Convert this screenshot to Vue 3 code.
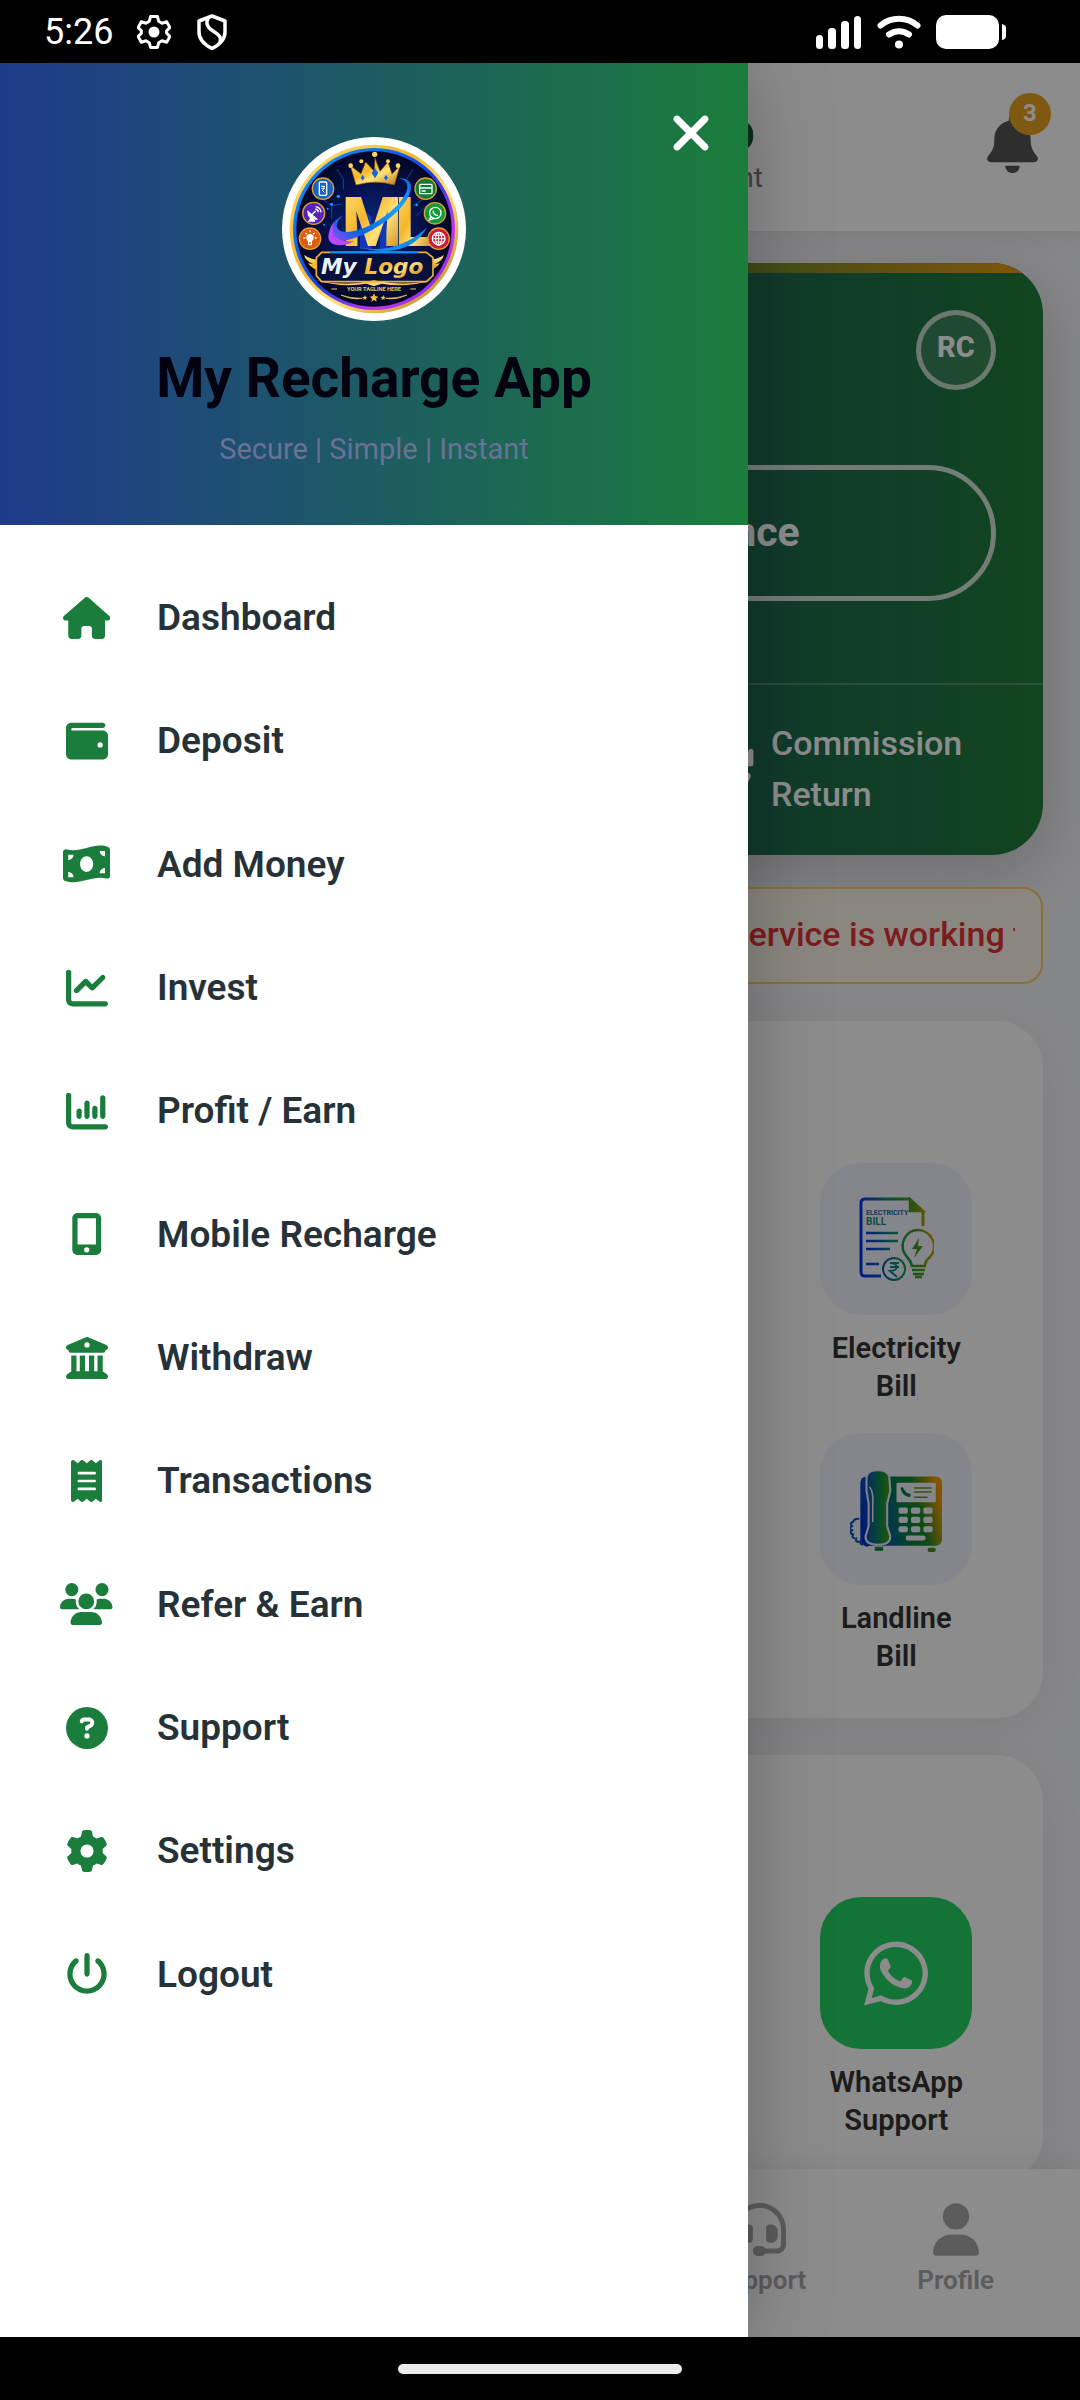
<script setup>
const menu = [
  { label: 'Dashboard', w: 576, path: 'M575.8 255.5c0 18-15 32.1-32 32.1l-32 0 .7 160.2c0 2.7-.2 5.4-.5 8.1l0 16.2c0 22.1-17.9 40-40 40l-16 0c-1.1 0-2.2 0-3.3-.1c-1.4 .1-2.8 .1-4.2 .1L416 512l-24 0c-22.1 0-40-17.9-40-40l0-24 0-64c0-17.7-14.3-32-32-32l-64 0c-17.7 0-32 14.3-32 32l0 64 0 24c0 22.1-17.9 40-40 40l-24 0-31.9 0c-1.5 0-3-.1-4.5-.2c-1.2 .1-2.4 .2-3.6 .2l-16 0c-22.1 0-40-17.9-40-40l0-112c0-.9 0-1.9 .1-2.8l0-69.7-32 0c-18 0-32-14-32-32.1c0-9 3-17 10-24L266.4 8c7-7 15-8 22-8s15 2 21 7L564.8 231.5c8 7 12 15 11 24z' },
  { label: 'Deposit', w: 512, path: 'M64 32C28.7 32 0 60.7 0 96L0 416c0 35.3 28.7 64 64 64l384 0c35.3 0 64-28.7 64-64l0-224c0-35.3-28.7-64-64-64L80 128c-8.8 0-16-7.2-16-16s7.2-16 16-16l368 0c17.7 0 32-14.3 32-32s-14.3-32-32-32L64 32zM416 272a32 32 0 1 1 0 64 32 32 0 1 1 0-64z' },
  { label: 'Add Money', w: 576, path: 'M0 112.5L0 422.3c0 18 10.1 35 27 41.3c87 32.5 174 10.3 261-11.9c79.8-20.3 159.6-40.7 239.3-18.9c23 6.3 48.7-9.5 48.7-33.4l0-309.9c0-18-10.1-35-27-41.3C462 15.9 375 38.1 288 60.3C208.2 80.6 128.4 100.9 48.7 79.1C25.6 72.8 0 88.6 0 112.5zM288 352c-44.2 0-80-43-80-96s35.8-96 80-96s80 43 80 96s-35.8 96-80 96zM64 352c35.3 0 64 28.7 64 64l-64 0 0-64zm64-208c0 35.3-28.7 64-64 64l0-64 64 0zM512 304l0 64-64 0c0-35.3 28.7-64 64-64zM448 96l64 0 0 64c-35.3 0-64-28.7-64-64z' },
  { label: 'Invest', w: 512, path: 'M64 64c0-17.7-14.3-32-32-32S0 46.3 0 64L0 400c0 44.2 35.8 80 80 80l400 0c17.7 0 32-14.3 32-32s-14.3-32-32-32L80 416c-8.8 0-16-7.2-16-16L64 64zm406.6 86.6c12.5-12.5 12.5-32.8 0-45.3s-32.8-12.5-45.3 0L320 210.7l-57.4-57.4c-12.5-12.5-32.8-12.5-45.3 0l-112 112c-12.5 12.5-12.5 32.8 0 45.3s32.8 12.5 45.3 0L240 221.3l57.4 57.4c12.5 12.5 32.8 12.5 45.3 0l128-128z' },
  { label: 'Profit / Earn', w: 512, path: 'M32 32c17.7 0 32 14.3 32 32l0 336c0 8.8 7.2 16 16 16l400 0c17.7 0 32 14.3 32 32s-14.3 32-32 32L80 480c-44.2 0-80-35.8-80-80L0 64C0 46.3 14.3 32 32 32zM160 224c17.7 0 32 14.3 32 32l0 64c0 17.7-14.3 32-32 32s-32-14.3-32-32l0-64c0-17.7 14.3-32 32-32zm128-32l0 128c0 17.7-14.3 32-32 32s-32-14.3-32-32l0-160c0-17.7 14.3-32 32-32s32 14.3 32 32zm64 0c17.7 0 32 14.3 32 32l0 96c0 17.7-14.3 32-32 32s-32-14.3-32-32l0-96c0-17.7 14.3-32 32-32zM480 96l0 224c0 17.7-14.3 32-32 32s-32-14.3-32-32l0-224c0-17.7 14.3-32 32-32s32 14.3 32 32z' },
  { label: 'Mobile Recharge', w: 384, path: 'M16 64C16 28.7 44.7 0 80 0L304 0c35.3 0 64 28.7 64 64l0 384c0 35.3-28.7 64-64 64L80 512c-35.3 0-64-28.7-64-64L16 64zM224 448a32 32 0 1 0 -64 0 32 32 0 1 0 64 0zM304 64L80 64l0 320 224 0 0-320z' },
  { label: 'Withdraw', w: 512, path: 'M243.4 2.6l-224 96c-14 6-21.8 21-18.7 35.8S16.8 160 32 160l0 8c0 13.3 10.7 24 24 24l400 0c13.3 0 24-10.7 24-24l0-8c15.2 0 28.3-10.7 31.3-25.6s-4.8-29.9-18.7-35.8l-224-96c-8-3.4-17.2-3.4-25.2 0zM128 224l-64 0 0 196.3c-.6 .3-1.2 .7-1.8 1.1l-48 32c-11.7 7.8-17 22.4-12.9 35.9S17.9 512 32 512l448 0c14.1 0 26.5-9.2 30.6-22.7s-1.1-28.1-12.9-35.9l-48-32c-.6-.4-1.2-.7-1.8-1.1L448 224l-64 0 0 192-40 0 0-192-64 0 0 192-48 0 0-192-64 0 0 192-40 0 0-192zM256 64a32 32 0 1 1 0 64 32 32 0 1 1 0-64z' },
  { label: 'Transactions', w: 384, path: 'M14 2.2C22.5-1.7 32.5-.3 39.6 5.8L80 40.4 120.4 5.8c9-7.7 22.3-7.7 31.2 0L192 40.4 232.4 5.8c9-7.7 22.2-7.7 31.2 0L304 40.4 344.4 5.8c7.1-6.1 17.1-7.5 25.6-3.6s14 12.4 14 21.8l0 464c0 9.4-5.5 17.9-14 21.8s-18.5 2.5-25.6-3.6L304 471.6l-40.4 34.6c-9 7.7-22.2 7.7-31.2 0L192 471.6l-40.4 34.6c-9 7.7-22.3 7.7-31.2 0L80 471.6 39.6 506.2c-7.1 6.1-17.1 7.5-25.6 3.6S0 497.4 0 488L0 24C0 14.6 5.5 6.1 14 2.2zM96 144c-8.8 0-16 7.2-16 16s7.2 16 16 16l192 0c8.8 0 16-7.2 16-16s-7.2-16-16-16L96 144zM80 352c0 8.8 7.2 16 16 16l192 0c8.8 0 16-7.2 16-16s-7.2-16-16-16L96 336c-8.8 0-16 7.2-16 16zM96 240c-8.8 0-16 7.2-16 16s7.2 16 16 16l192 0c8.8 0 16-7.2 16-16s-7.2-16-16-16L96 240z' },
  { label: 'Refer & Earn', w: 640, path: 'M144 0a80 80 0 1 1 0 160A80 80 0 1 1 144 0zM512 0a80 80 0 1 1 0 160A80 80 0 1 1 512 0zM0 298.7C0 239.8 47.8 192 106.7 192l42.7 0c15.9 0 31 3.5 44.6 9.7c-1.3 7.2-1.9 14.7-1.9 22.3c0 38.2 16.8 72.5 43.3 96c-.2 0-.4 0-.7 0L21.3 320C9.6 320 0 310.4 0 298.7zM405.3 320c-.2 0-.4 0-.7 0c26.6-23.5 43.3-57.8 43.3-96c0-7.6-.7-15-1.9-22.3c13.6-6.3 28.7-9.7 44.6-9.7l42.7 0C592.2 192 640 239.8 640 298.7c0 11.8-9.6 21.3-21.3 21.3l-213.3 0zM224 224a96 96 0 1 1 192 0 96 96 0 1 1 -192 0zM128 485.3C128 411.7 187.7 352 261.3 352l117.3 0C452.3 352 512 411.7 512 485.3c0 14.7-11.9 26.7-26.7 26.7l-330.7 0c-14.7 0-26.7-11.9-26.7-26.7z' },
  { label: 'Support', w: 512, path: 'M256 512A256 256 0 1 0 256 0a256 256 0 1 0 0 512zM169.8 165.3c7.9-22.3 29.1-37.3 52.8-37.3l58.3 0c34.9 0 63.1 28.3 63.1 63.1c0 22.6-12.1 43.5-31.7 54.8L280 264.4c-.2 13-10.9 23.6-24 23.6c-13.3 0-24-10.7-24-24l0-13.5c0-8.6 4.6-16.5 12.1-20.8l44.3-25.4c4.7-2.7 7.6-7.7 7.6-13.1c0-8.4-6.8-15.1-15.1-15.1l-58.3 0c-3.4 0-6.4 2.1-7.5 5.3l-.4 1.2c-4.4 12.5-18.2 19-30.6 14.6s-19-18.2-14.6-30.6l.4-1.2zM224 352a32 32 0 1 1 64 0 32 32 0 1 1 -64 0z' },
  { label: 'Settings', w: 512, path: 'M495.9 166.6c3.2 8.7 .5 18.4-6.4 24.6l-43.3 39.4c1.1 8.3 1.7 16.8 1.7 25.4s-.6 17.1-1.7 25.4l43.3 39.4c6.9 6.2 9.6 15.9 6.4 24.6c-4.4 11.9-9.7 23.3-15.8 34.3l-4.7 8.1c-6.6 11-14 21.4-22.1 31.2c-5.9 7.2-15.7 9.6-24.5 6.8l-55.7-17.7c-13.4 10.3-28.2 18.9-44 25.4l-12.5 57.1c-2 9.1-9 16.3-18.2 17.8c-13.8 2.3-28 3.5-42.5 3.5s-28.7-1.2-42.5-3.5c-9.2-1.5-16.2-8.7-18.2-17.8l-12.5-57.1c-15.8-6.5-30.6-15.1-44-25.4L83.1 425.9c-8.8 2.8-18.6 .3-24.5-6.8c-8.1-9.8-15.5-20.2-22.1-31.2l-4.7-8.1c-6.1-11-11.4-22.4-15.8-34.3c-3.2-8.7-.5-18.4 6.4-24.6l43.3-39.4C64.6 273.1 64 264.6 64 256s.6-17.1 1.7-25.4L22.4 191.2c-6.9-6.2-9.6-15.9-6.4-24.6c4.4-11.9 9.7-23.3 15.8-34.3l4.7-8.1c6.6-11 14-21.4 22.1-31.2c5.9-7.2 15.7-9.6 24.5-6.8l55.7 17.7c13.4-10.3 28.2-18.9 44-25.4l12.5-57.1c2-9.1 9-16.3 18.2-17.8C227.3 1.2 241.5 0 256 0s28.7 1.2 42.5 3.5c9.2 1.5 16.2 8.7 18.2 17.8l12.5 57.1c15.8 6.5 30.6 15.1 44 25.4l55.7-17.7c8.8-2.8 18.6-.3 24.5 6.8c8.1 9.8 15.5 20.2 22.1 31.2l4.7 8.1c6.1 11 11.4 22.4 15.8 34.3zM256 336a80 80 0 1 0 0-160 80 80 0 1 0 0 160z' },
  { label: 'Logout', w: 512, path: 'M288 32c0-17.7-14.3-32-32-32s-32 14.3-32 32l0 224c0 17.7 14.3 32 32 32s32-14.3 32-32l0-224zM143.5 120.6c13.6-11.3 15.4-31.5 4.1-45.1s-31.5-15.4-45.1-4.1C49.7 115.4 16 181.8 16 256c0 132.5 107.5 240 240 240s240-107.5 240-240c0-74.2-33.8-140.6-86.6-184.6c-13.6-11.3-33.8-9.4-45.1 4.1s-9.4 33.8 4.1 45.1c38.9 32.3 63.5 81 63.5 135.4c0 97.2-78.8 176-176 176s-176-78.8-176-176c0-54.4 24.7-103.1 63.5-135.4z' },
]
const phonePath = 'M380.9 97.1C339 55.1 283.2 32 223.9 32c-122.4 0-222 99.6-222 222 0 39.1 10.2 77.3 29.6 111L0 480l117.7-30.9c32.4 17.7 68.9 27 106.1 27h.1c122.3 0 224.1-99.6 224.1-222 0-59.3-25.2-115-67.1-157zm-157 341.6c-33.2 0-65.7-8.9-94-25.7l-6.7-4-69.8 18.3L72 359.2l-4.4-7c-18.5-29.4-28.2-63.3-28.2-98.2 0-101.7 82.8-184.5 184.6-184.5 49.3 0 95.6 19.2 130.4 54.1 34.8 34.9 56.2 81.2 56.1 130.5 0 101.8-84.9 184.6-186.6 184.6zm101.2-138.2c-5.5-2.8-32.8-16.2-37.9-18-5.1-1.9-8.8-2.8-12.5 2.8-3.7 5.6-14.3 18-17.6 21.8-3.2 3.7-6.5 4.2-12 1.4-32.6-16.3-54-29.1-75.5-66-5.7-9.8 5.7-9.1 16.3-30.3 1.8-3.7.9-6.9-.5-9.7-1.4-2.8-12.5-30.1-17.1-41.2-4.5-10.8-9.1-9.3-12.5-9.5-3.2-.2-6.9-.2-10.6-.2-3.7 0-9.7 1.4-14.8 6.9-5.1 5.6-19.4 19-19.4 46.3 0 27.3 19.9 53.7 22.6 57.4 2.8 3.7 39.1 59.7 94.8 83.8 35.2 15.2 49 16.5 66.6 13.9 10.7-1.6 32.8-13.4 37.4-26.4 4.6-13 4.6-24.1 3.2-26.4-1.3-2.5-5-3.9-10.5-6.6z'
const keys = [0, 1, 2, 3, 4, 5, 6, 7, 8]
</script>

<template>
  <div class="phone">
    <div class="status">
      <span class="time">5:26</span>
      <svg class="s-gear" width="34" height="36" viewBox="0 0 34 36" fill="none" stroke="#fff" stroke-width="3" stroke-linejoin="round">
        <path d="M13.500 2.500h7l1.200 4.800 3.300 1.900 4.700-1.400 3.200 5.700-3.300 3.400v2.200l3.300 3.400-3.200 5.700-4.700-1.400-3.300 1.900-1.200 4.800h-7l-1.200-4.800-3.300-1.900-4.700 1.400-3.200-5.700 3.300-3.400v-2.200l-3.300-3.400 3.200-5.700 4.700 1.400 3.300-1.900z" />
        <circle cx="17" cy="18" r="5.500" fill="#fff" stroke="none" />
      </svg>
      <svg class="s-shield" width="30" height="36" viewBox="0 0 30 36" fill="none" stroke="#fff" stroke-width="3.500" stroke-linejoin="round">
        <path d="M15 2L28 7v11c0 8-6 13-13 16.500C8 31 2 26 2 18V7z" />
        <path d="M12 3c-4 6-2 10 4 14s9 6 7 12" />
      </svg>
      <span class="grow"></span>
      <svg width="46" height="34" viewBox="0 0 46 34" fill="#fff">
        <rect x="0" y="20" width="7" height="14" rx="3.500" /><rect x="12" y="13" width="8" height="21" rx="3.500" />
        <rect x="25" y="6" width="8" height="28" rx="3.500" /><rect x="38" y="1" width="7" height="33" rx="3.500" />
      </svg>
      <svg class="s-wifi" width="44" height="34" viewBox="0 0 44 34" fill="none" stroke="#fff" stroke-width="6" stroke-linecap="round">
        <path d="M3.500 10.500C14 1.500 30 1.500 40.500 10.500M12 19.500c6-4.500 14-4.500 20 0" />
        <circle cx="22" cy="29.500" r="4" fill="#fff" stroke="none" />
      </svg>
      <svg width="70" height="34" viewBox="0 0 70 34" fill="#fff">
        <rect width="63" height="34" rx="10" /><path d="M66 9q4 1 4 4v8q0 3-4 4z" />
      </svg>
    </div>

    <div class="app">
      <header class="top">
        <div class="brand">
          <strong>My Recharge App</strong>
          <span>Secure | Simple | Instant</span>
        </div>
        <button class="bell" aria-label="Notifications">
          <svg width="51" height="58" viewBox="0 0 448 512" fill="#555"><path d="M224 0c-17.700 0-32 14.300-32 32l0 19.200C119 66 64 130.600 64 208l0 18.800c0 47-17.300 92.400-48.500 127.600l-7.400 8.300c-8.400 9.400-10.400 22.900-5.300 34.400S19.400 416 32 416l384 0c12.600 0 24-7.400 29.200-18.900s3.100-25-5.300-34.400l-7.400-8.300C401.300 319.200 384 273.900 384 226.800l0-18.800c0-77.400-55-142-128-156.800L256 32c0-17.700-14.300-32-32-32zm45.300 493.300c12-12 18.700-28.300 18.700-45.300l-64 0-64 0c0 17 6.700 33.300 18.700 45.300s28.300 18.700 45.300 18.700s33.300-6.700 45.300-18.700z" /></svg>
          <span class="badge">3</span>
        </button>
      </header>

      <main class="content">
        <section class="card">
          <div class="card-bar"></div>
          <div class="card-body">
            <div class="avatar">RC</div>
            <button class="balance">Click Here to Check Balance</button>
          </div>
          <div class="card-foot">
            <svg width="51" height="51" viewBox="0 0 512 512" fill="currentColor"><path d="M142.900 142.900c-17.500 17.500-30.100 38-37.800 59.800c-5.900 16.700-24.200 25.400-40.800 19.500s-25.400-24.200-19.500-40.800C55.600 150.700 73.200 122 97.600 97.600c87.200-87.200 228.300-87.500 315.800-1L455 55c6.900-6.900 17.200-8.900 26.200-5.200s14.800 12.500 14.800 22.200l0 128c0 13.300-10.700 24-24 24l-8.400 0L344 224c-9.700 0-18.500-5.800-22.200-14.800s-1.700-19.300 5.200-26.200l41.100-41.100c-62.600-61.500-163.100-61.200-225.300 1zM16 312c0-13.300 10.700-24 24-24l7.600 0 .7 0L168 288c9.700 0 18.500 5.800 22.200 14.800s1.700 19.300-5.200 26.200l-41.100 41.100c62.600 61.500 163.100 61.200 225.300-1c17.500-17.500 30.100-38 37.800-59.800c5.900-16.700 24.200-25.400 40.800-19.500s25.400 24.200 19.500 40.800c-10.800 30.600-28.400 59.300-52.900 83.800c-87.200 87.200-228.300 87.500-315.800 1L57 457c-6.900 6.900-17.200 8.900-26.200 5.200S16 449.700 16 440l0-119.600 0-.7 0-7.600z" /></svg>
            <span>Commission Return</span>
          </div>
        </section>

        <div class="notice"><p>service is working to</p></div>

        <section class="panel">
          <h2>Recharge &amp; Bills</h2>
          <div class="grid">
            <a class="tile last" href="#">
              <span class="pic">
                <svg width="75" height="84" viewBox="0 0 75 84" fill="none" stroke="url(#rainbow)" stroke-width="2.500">
                  <defs>
                    <linearGradient id="rainbow" gradientUnits="userSpaceOnUse" x1="0" y1="40" x2="76" y2="28">
                      <stop offset="0" stop-color="#0035e8" /><stop offset=".15" stop-color="#0b46d8" /><stop offset=".5" stop-color="#0b9a55" /><stop offset=".75" stop-color="#4f9a18" /><stop offset="1" stop-color="#f0a000" />
                    </linearGradient>
                  </defs>
                  <path d="M22 79H6q-4 0-4-4V6q0-4 4-4h44l14 13v14" stroke-width="3" />
                  <path d="M51 2v12h13z" fill="url(#rainbow)" />
                  <path d="M7 36h32M7 44h32M7 52h24M7 67h13" />
                  <circle cx="35" cy="72" r="11" stroke-width="2" />
                  <path d="M31 66h9M31 70h9M31 66c9 0 9 8 0 8l7 6" stroke-width="2" />
                  <path d="M53 69q-1-5-5-9c-10-12-1-27 11-27s22 15 12 27q-5 4-5 9z" />
                  <path d="M53 73h13M54 77h11M56 80h7" />
                  <path d="M60 41l-7 11h5l-3 9 9-12h-5z" fill="url(#rainbow)" stroke="none" />
                  <text x="7" y="18" class="doc-sm" fill="#2368a8">ELECTRICITY</text>
                  <text x="7" y="28" class="doc" fill="#1c8a72">BILL</text>
                </svg>
              </span>
              <span class="name">Electricity Bill</span>
            </a>
            <a class="tile last" href="#">
              <span class="pic">
                <svg width="93" height="88" viewBox="0 0 90 80" preserveAspectRatio="xMidYMax meet" fill="none">
                  <defs>
                    <linearGradient id="desk" x1="0" y1=".6" x2="1" y2=".4">
                      <stop offset="0" stop-color="#0033c8" /><stop offset=".2" stop-color="#0a50b8" /><stop offset=".52" stop-color="#087f45" /><stop offset=".72" stop-color="#1d8828" /><stop offset="1" stop-color="#f09c00" />
                    </linearGradient>
                    <linearGradient id="handset"><stop offset="0" stop-color="#0a48c0" /><stop offset=".6" stop-color="#118a48" /><stop offset="1" stop-color="#4a9a18" /></linearGradient>
                  </defs>
                  <path d="M9 47q-5-1-6 3q-4 1-1 4q-4 2 0 4q-3 3 1 4q-2 4 3 4q-1 4 4 3q0 4 4 2q2 4 5 0q3 3 5-1" stroke="#0a50c0" stroke-width="2" />
                  <rect x="24" y="74" width="8" height="4" fill="#12884a" /><rect x="75" y="75" width="8" height="4" rx="2" fill="#45901c" />
                  <rect x="10" y="6" width="79" height="67" rx="6" fill="url(#desk)" />
                  <path d="M16 6q2-6 11-6t11 6l1 14-3 12v22l3 10q0 8-12 8t-12-8l3-10V32l-2-12z" fill="url(#handset)" stroke="#e6ecfa" stroke-width="2" />
                  <path d="M19 16q4 5 3 18v16" stroke="#e6ecfa" stroke-width="1.500" />
                  <rect x="45" y="12" width="38" height="19" rx="1" fill="#f2f4fd" />
                  <path d="M49 17q1 8 9 9l1-3-4-1-3-4-1-2z" fill="#0a7f48" />
                  <path d="M62 17h17M62 21h17M62 26h13" stroke="#6a9020" stroke-width="1.500" />
                  <rect v-for="k in keys" :key="k" :x="47 + (k % 3) * 12" :y="36 + Math.floor(k / 3) * 9" width="9" height="6" rx="2" fill="#f2f4fd" />
                  <rect x="54" y="63" width="19" height="5" rx="2" fill="#f2f4fd" />
                </svg>
              </span>
              <span class="name">Landline Bill</span>
            </a>
          </div>
        </section>

        <section class="panel">
          <h2>Help &amp; Support</h2>
          <div class="grid">
            <a class="tile last" href="#">
              <span class="pic whatsapp"><svg width="64" height="73" viewBox="0 0 448 512" fill="#fff"><path :d="phonePath" /></svg></span>
              <span class="name">WhatsApp Support</span>
            </a>
          </div>
        </section>
      </main>

      <nav class="tabs">
        <a href="#">Home</a>
        <a href="#">Recharges</a>
        <a href="#">Services</a>
        <a href="#">
          <svg width="53" height="53" viewBox="0 0 512 512" fill="currentColor"><path d="M256 48C141.100 48 48 141.100 48 256l0 40c0 13.300-10.700 24-24 24s-24-10.700-24-24l0-40C0 114.600 114.600 0 256 0S512 114.600 512 256l0 144.100c0 48.600-39.400 88-88.100 88L313.600 488c-8.300 14.300-23.800 24-41.600 24l-32 0c-26.500 0-48-21.500-48-48s21.500-48 48-48l32 0c17.800 0 33.300 9.700 41.600 24l110.400 .1c22.100 0 40-17.900 40-40L464 256c0-114.900-93.100-208-208-208zM144 208l16 0c17.700 0 32 14.300 32 32l0 112c0 17.700-14.300 32-32 32l-16 0c-35.300 0-64-28.700-64-64l0-48c0-35.300 28.700-64 64-64zm224 0c35.300 0 64 28.700 64 64l0 48c0 35.300-28.700 64-64 64l-16 0c-17.700 0-32-14.300-32-32l0-112c0-17.700 14.300-32 32-32l16 0z" /></svg>
          Support
        </a>
        <a href="#">
          <svg width="46" height="53" viewBox="0 0 448 512" fill="currentColor"><path d="M224 256A128 128 0 1 0 224 0a128 128 0 1 0 0 256zm-45.700 48C79.800 304 0 383.800 0 482.300C0 498.700 13.300 512 29.700 512l388.600 0c16.400 0 29.700-13.300 29.700-29.700C448 383.800 368.200 304 269.700 304l-91.400 0z" /></svg>
          Profile
        </a>
      </nav>

      <div class="overlay"></div>

      <aside class="drawer">
        <div class="drawer-head">
          <svg class="logo" width="184" height="184" viewBox="36 34 552 552">
            <defs>
              <linearGradient id="gold" x1="0" y1="0" x2="1" y2="1"><stop offset="0" stop-color="#ffe680" /><stop offset=".4" stop-color="#f5b62b" /><stop offset=".6" stop-color="#ffe27a" /><stop offset="1" stop-color="#b87209" /></linearGradient>
              <linearGradient id="ring" x1="0" y1="0" x2="1" y2="1"><stop offset="0" stop-color="#0aa4ff" /><stop offset=".5" stop-color="#1340e0" /><stop offset=".75" stop-color="#c832f5" /><stop offset="1" stop-color="#4a2be0" /></linearGradient>
              <linearGradient id="swoosh" x1="0" y1="1" x2="1" y2="0"><stop offset="0" stop-color="#a04bff" /><stop offset=".25" stop-color="#0a62e0" /><stop offset=".7" stop-color="#1fa4ff" /><stop offset="1" stop-color="#0a6ae8" /></linearGradient>
              <radialGradient id="night"><stop offset="0" stop-color="#0a2a80" /><stop offset=".6" stop-color="#04104a" /><stop offset="1" stop-color="#020626" /></radialGradient>
            </defs>
            <circle cx="312" cy="310" r="276" fill="#fff" />
            <circle cx="312" cy="310" r="253" fill="url(#gold)" />
            <circle cx="312" cy="310" r="243" fill="url(#ring)" />
            <circle cx="312" cy="310" r="233" fill="url(#night)" />
            <path d="M150 215l35 25v40M200 130l20 30v30M470 240l-30 30M430 130l-20 30M185 240l30-5M430 240l30-20" stroke="#1468c8" stroke-width="2" fill="none" />
            <path d="M258 178l-17-58 32 24 14-35 26 28 2-40 15 40 24-28 12 36 24-25-17 58q-55-17-115 0z" fill="url(#gold)" stroke="#8a5206" stroke-width="2" />
            <g fill="#ffd45c"><circle cx="242" cy="120" r="7" /><circle cx="274" cy="107" r="6" /><circle cx="314" cy="86" r="8" /><circle cx="354" cy="107" r="6" /><circle cx="384" cy="120" r="7" /></g>
            <path d="M315 127l10 15-10 16-10-16zM278 147l6 9-6 9-6-9zM348 147l6 9-6 9-6-9z" fill="#1565e6" />
            <path d="M270 240l35 35v95h-35zM330 270l25-25v125h-25z" fill="#1238b8" />
            <text x="216" y="360" class="mark" fill="url(#gold)">M</text>
            <text x="376" y="360" class="mark" fill="url(#gold)">L</text>
            <path d="M385 158c65-5 45 75-50 137-70 47-160 75-157 28 1-24 18-42 42-54-35 30-20 58 28 48 68-14 150-78 163-125 5-20-7-31-26-34z" fill="url(#swoosh)" />
            <path d="M192 290c-15 45 15 62 62 55-40 25-90 15-77-24 3-12 8-23 15-31z" fill="#b848ff" />
            <path d="M262 363c70 18 145 1 208-57-40 75-130 82-208 57z" fill="#138bf4" />
            <g stroke="#e0a02c" stroke-width="4">
              <circle cx="159" cy="189" r="32" fill="#1464c8" /><circle cx="131" cy="263" r="33" fill="#5424b8" /><circle cx="120" cy="339" r="32" fill="#e05a10" />
              <circle cx="467" cy="189" r="32" fill="#147a34" /><circle cx="495" cy="263" r="32" fill="#119a38" /><circle cx="506" cy="339" r="32" fill="#d01838" />
            </g>
            <g fill="none" stroke="#fff" stroke-width="4">
              <rect x="148" y="169" width="22" height="40" rx="3" /><path d="M154 182h11M154 188h11M155 181c12 2 8 12 1 12l7 7" stroke-width="2.500" />
              <path d="M114 258q0 24 26 22zM122 270l15-14M125 275l-8 11h18" fill="#fff" /><path d="M136 250q9 2 9 10M137 243q15 3 16 17" />
              <circle cx="120" cy="336" r="9" fill="#fff" /><path d="M116 347h8v10h-8zM120 314v6M100 337h6M134 337h6M106 322l5 4M134 322l-5 4" />
              <rect x="449" y="176" width="37" height="28" rx="3" /><path d="M449 187h37M455 196h12" />
              <circle cx="496" cy="262" r="17" /><path d="M483 272l-5 11 13-4M489 255q1 13 15 15" />
              <circle cx="506" cy="339" r="19" /><ellipse cx="506" cy="339" rx="9" ry="19" /><path d="M487 339h38M506 320v38M490 329h32M490 349h32" stroke-width="3" />
            </g>
            <g fill="#14a0ff"><circle cx="205" cy="212" r="5" /><circle cx="185" cy="236" r="4" /><circle cx="173" cy="249" r="3" /><circle cx="440" cy="238" r="4" /><circle cx="162" cy="297" r="3" /></g>
            <path d="M102 388q24 16 54 15l-6 10 10 7-8 8 10 9q-35-3-48-24l15 2q-22-9-27-27zM522 388q-24 16-54 15l6 10-10 7 8 8-10 9q35-3 48-24l-15 2q22-9 27-27z" fill="url(#gold)" />
            <path d="M155 380h314l20 16v54l-20 18H155l-16-18v-54z" fill="#05103c" stroke="#f0b034" stroke-width="5" />
            <path d="M180 380h265" stroke="#168cff" stroke-width="4" />
            <text x="153" y="444" class="wordmark" fill="#eef2fb">My</text>
            <text x="283" y="444" class="wordmark" fill="url(#gold)">Logo</text>
            <path d="M135 462q90 22 177 2 90 20 178-2-80 26-155 12l-23 8-23-8q-78 13-154-12z" fill="url(#gold)" />
            <text x="312" y="496" class="strap" fill="#f2c65c">YOUR TAGLINE HERE</text>
            <path d="M184 490h17M421 490h17" stroke="#f2c65c" stroke-width="3" />
            <path d="M213 508q35 16 64 10-38 0-64-10zM411 508q-35 16-64 10 38 0 64-10z" fill="#f2c65c" stroke="#f2c65c" stroke-width="2" />
            <path d="M312 503l4 9 9 1-7 6 2 9-8-5-8 5 2-9-7-6 9-1zM285 508l2 5 5 1-4 4 1 5-4-3-5 3 1-5-4-4 6-1zM340 508l2 5 5 1-4 4 1 5-4-3-5 3 1-5-4-4 6-1z" fill="#f9c23c" />
          </svg>
          <h1>My Recharge App</h1>
          <p>Secure | Simple | Instant</p>
          <button class="close" aria-label="Close menu">
            <svg width="42" height="56" viewBox="0 0 384 512" fill="#fff"><path d="M342.600 150.600c12.500-12.500 12.500-32.800 0-45.300s-32.800-12.500-45.300 0L192 210.700 86.600 105.400c-12.500-12.500-32.800-12.500-45.300 0s-12.500 32.800 0 45.300L146.700 256 41.400 361.400c-12.500 12.500-12.500 32.800 0 45.300s32.800 12.500 45.300 0L192 301.300 297.400 406.600c12.500 12.500 32.800 12.500 45.300 0s12.500-32.800 0-45.300L237.300 256 342.600 150.600z" /></svg>
          </button>
        </div>
        <nav class="menu">
          <a v-for="item in menu" :key="item.label" href="#">
            <span class="ico"><svg height="42" :viewBox="`0 0 ${item.w} 512`" fill="currentColor"><path :d="item.path" /></svg></span>
            {{ item.label }}
          </a>
        </nav>
      </aside>
    </div>

    <div class="gesture"><span></span></div>
  </div>
</template>

<style>
body { margin: 0; background: #000; }
</style>

<style scoped>
* { box-sizing: border-box; }
a { color: inherit; text-decoration: none; }
button { font: inherit; color: inherit; background: none; border: 0; padding: 0; }
h1, h2, p { margin: 0; }
svg { display: block; flex: none; }

.phone {
  height: 100vh;
  display: flex;
  flex-direction: column;
  background: #000;
  font-family: Roboto, "Liberation Sans", sans-serif;
}
.status {
  flex: none;
  height: 63px;
  padding: 0 74px 0 44px;
  display: flex;
  align-items: center;
  color: #fff;
}
.time { font-size: 36px; line-height: 44px; }
.s-gear { margin-left: 24px; }
.s-shield { margin-left: 26px; }
.s-wifi { margin: 0 15px; }
.grow { flex: 1; }

.app {
  position: relative;
  flex: 1;
  min-height: 0;
  display: flex;
  flex-direction: column;
  overflow: hidden;
  background: #f3f4f8;
}
.top {
  position: relative;
  z-index: 1;
  flex: none;
  height: 168px;
  padding: 0 42px;
  display: flex;
  align-items: center;
  justify-content: flex-end;
  gap: 224px;
  background: #fff;
  box-shadow: 0 4px 24px rgba(0, 0, 0, .08);
}
.brand { display: flex; flex-direction: column; align-items: flex-end; padding-top: 6px; }
.brand strong { padding-right: 8px; font-size: 50px; line-height: 56px; color: #12583c; }
.brand span { font-size: 28px; line-height: 36px; color: #777; }
.bell { position: relative; margin-bottom: 6px; }
.badge {
  position: absolute;
  top: -22px;
  right: -13px;
  width: 42px;
  height: 42px;
  border-radius: 50%;
  background: #e8a020;
  color: #fff;
  font-size: 24px;
  font-weight: 700;
  line-height: 40px;
  text-align: center;
}

.content { flex: 1; min-height: 0; overflow: hidden; padding: 32px 37px 0; }
.card {
  border-radius: 51px;
  overflow: hidden;
  background: linear-gradient(90deg, #1f3a8b, #1f7d3a);
  box-shadow: 0 20px 60px rgba(0, 0, 0, .18);
  color: #fff;
}
.card-bar { height: 10px; background: linear-gradient(90deg, #1f3a8b, #1b7d3a, #ee9c14); }
.card-body {
  height: 410px;
  padding: 37px 47px 0;
  display: flex;
  flex-direction: column;
  align-items: flex-end;
  gap: 75px;
}
.avatar {
  width: 80px;
  height: 80px;
  border: 5px solid rgba(255, 255, 255, .7);
  border-radius: 50%;
  background: rgba(255, 255, 255, .12);
  font-size: 29px;
  font-weight: 800;
  line-height: 64px;
  text-align: center;
}
.balance {
  width: 100%;
  height: 136px;
  border: 5px solid rgba(255, 255, 255, .8);
  border-radius: 68px;
  padding-bottom: 2px;
  font-size: 41px;
  font-weight: 700;
}
.card-foot {
  height: 172px;
  border-top: 2px solid rgba(255, 255, 255, .2);
  padding: 0 47px 2px 0;
  display: flex;
  align-items: center;
  justify-content: flex-end;
  gap: 16px;
  font-size: 34px;
  font-weight: 500;
  line-height: 51px;
}
.card-foot span { width: 225px; }
.notice {
  margin-top: 32px;
  height: 97px;
  border: 2px solid #ffc970;
  border-radius: 20px;
  padding: 0 26px 3px;
  display: flex;
  align-items: center;
  background: rgba(255, 246, 230, .8);
  color: #e03338;
  font-size: 34px;
  font-weight: 500;
}
.notice p { width: 100%; padding-left: 666px; overflow: hidden; white-space: nowrap; line-height: 48px; }

.panel {
  margin-top: 37px;
  padding: 40px 28px 43px;
  border-radius: 46px;
  background: #fff;
  box-shadow: 0 8px 48px rgba(0, 0, 0, .06);
}
.panel h2 { padding-left: 12px; font-size: 40px; line-height: 48px; color: #222; }
.grid {
  margin-top: 54px;
  display: grid;
  grid-template-columns: repeat(4, 1fr);
  row-gap: 28px;
}
.tile { display: flex; flex-direction: column; align-items: center; gap: 14px; }
.last { grid-column: 4; }
.pic {
  width: 152px;
  height: 152px;
  border-radius: 41px;
  display: flex;
  align-items: center;
  justify-content: center;
  background: #f2f4fd;
}
.whatsapp { background: #25d366; }
.name {
  width: 152px;
  font-size: 29px;
  font-weight: 600;
  line-height: 38px;
  text-align: center;
  color: #333;
}
.doc-sm { font: 700 7px Roboto, sans-serif; stroke: none; }
.doc { font: 700 10px Roboto, sans-serif; stroke: none; }

.tabs {
  position: relative;
  flex: none;
  height: 168px;
  padding: 34px 86px 0;
  display: flex;
  justify-content: space-between;
  background: #fff;
  box-shadow: 0 -4px 30px rgba(0, 0, 0, .08);
  color: #a8a8a8;
  font-size: 26px;
  font-weight: 600;
  line-height: 32px;
}
.tabs a { display: flex; flex-direction: column; align-items: center; gap: 8px; }

.overlay { position: absolute; inset: 0; z-index: 2; background: rgba(0, 0, 0, .45); }
.drawer {
  position: absolute;
  inset: 0 auto 0 0;
  z-index: 3;
  width: 748px;
  max-width: 85%;
  background: #fff;
  box-shadow: 0 0 77px rgba(0, 0, 0, .25);
}
.drawer-head {
  position: relative;
  height: 462px;
  padding-top: 74px;
  display: flex;
  flex-direction: column;
  align-items: center;
  background: linear-gradient(90deg, #1f3a8b, #1b7d3a);
}
.mark { font: 900 205px Roboto, sans-serif; }
.wordmark { font: italic 700 65px "DejaVu Sans", sans-serif; }
.strap { font: 700 17px Roboto, sans-serif; text-anchor: middle; }
.drawer-head h1 { margin-top: 24px; font-size: 55px; font-weight: 700; line-height: 66px; color: #01010f; }
.drawer-head p { margin-top: 21px; font-size: 29px; line-height: 34px; color: #6b7195; }
.close { position: absolute; top: 42px; right: 36px; }
.menu {
  height: 1511px;
  padding-top: 31px;
  display: grid;
  grid-auto-rows: 1fr;
  color: #263238;
  font-size: 37px;
  font-weight: 600;
}
.menu a { display: flex; align-items: center; padding-left: 58px; }
.ico { width: 57px; margin-right: 42px; display: flex; justify-content: center; color: #1b7d3c; }

.gesture { flex: none; height: 63px; display: flex; justify-content: center; padding-top: 27px; }
.gesture span { width: 284px; height: 10px; border-radius: 5px; background: #ebebeb; }
</style>
